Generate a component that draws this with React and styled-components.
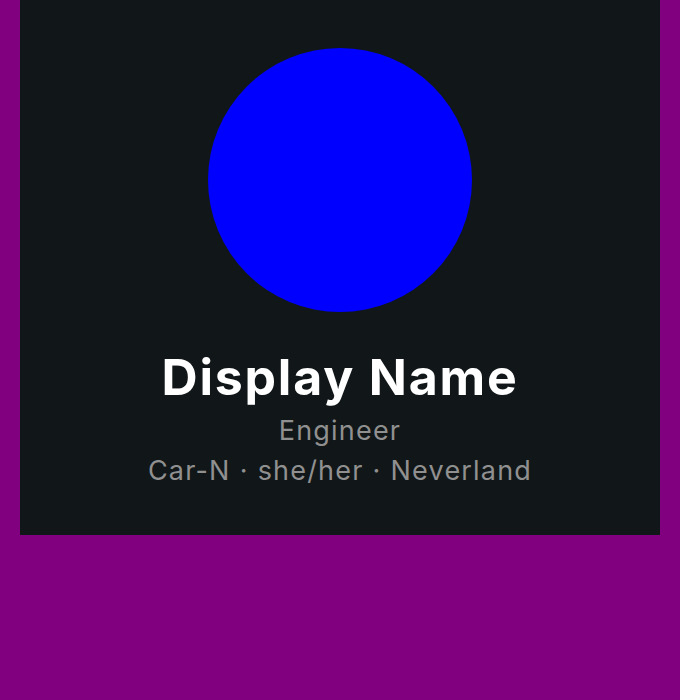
import React from 'react'
import styled, { createGlobalStyle } from 'styled-components'

const GlobalStyle = createGlobalStyle`
  html, body {
    margin: 0;
    padding: 0;
    background: #800080;
  }
  body {
    font-family: Inter, "Noto Sans", sans-serif;
  }
`;

const Page = styled.div`
  padding: 0 20px;
`;

const Card = styled.div`
  background: #111618;
  display: flex;
  flex-direction: column;
  align-items: center;
  padding: 48px 0 44px;
`;

const Avatar = styled.div`
  width: 264px;
  height: 264px;
  border-radius: 50%;
  background: ${props => props.color};
`;

const Name = styled.h1`
  margin: 33px 0 2px;
  font-size: 50px;
  line-height: 64px;
  letter-spacing: 1.8px;
  font-weight: 700;
  color: #ffffff;
`;

const Meta = styled.div`
  font-size: 27px;
  line-height: 40px;
  letter-spacing: 1.2px;
  color: #909090;
`;

const Dot = styled.span`
  margin: 0 9px;
`;

const App = () => {
  return (
    <Page>
      <GlobalStyle />
      <Card>
        <Avatar color="#0000ff" />
        <Name>Display Name</Name>
        <Meta>Engineer</Meta>
        <Meta>
          Car-N<Dot>·</Dot>she/her<Dot>·</Dot>Neverland
        </Meta>
      </Card>
    </Page>
  )
}

export default App
